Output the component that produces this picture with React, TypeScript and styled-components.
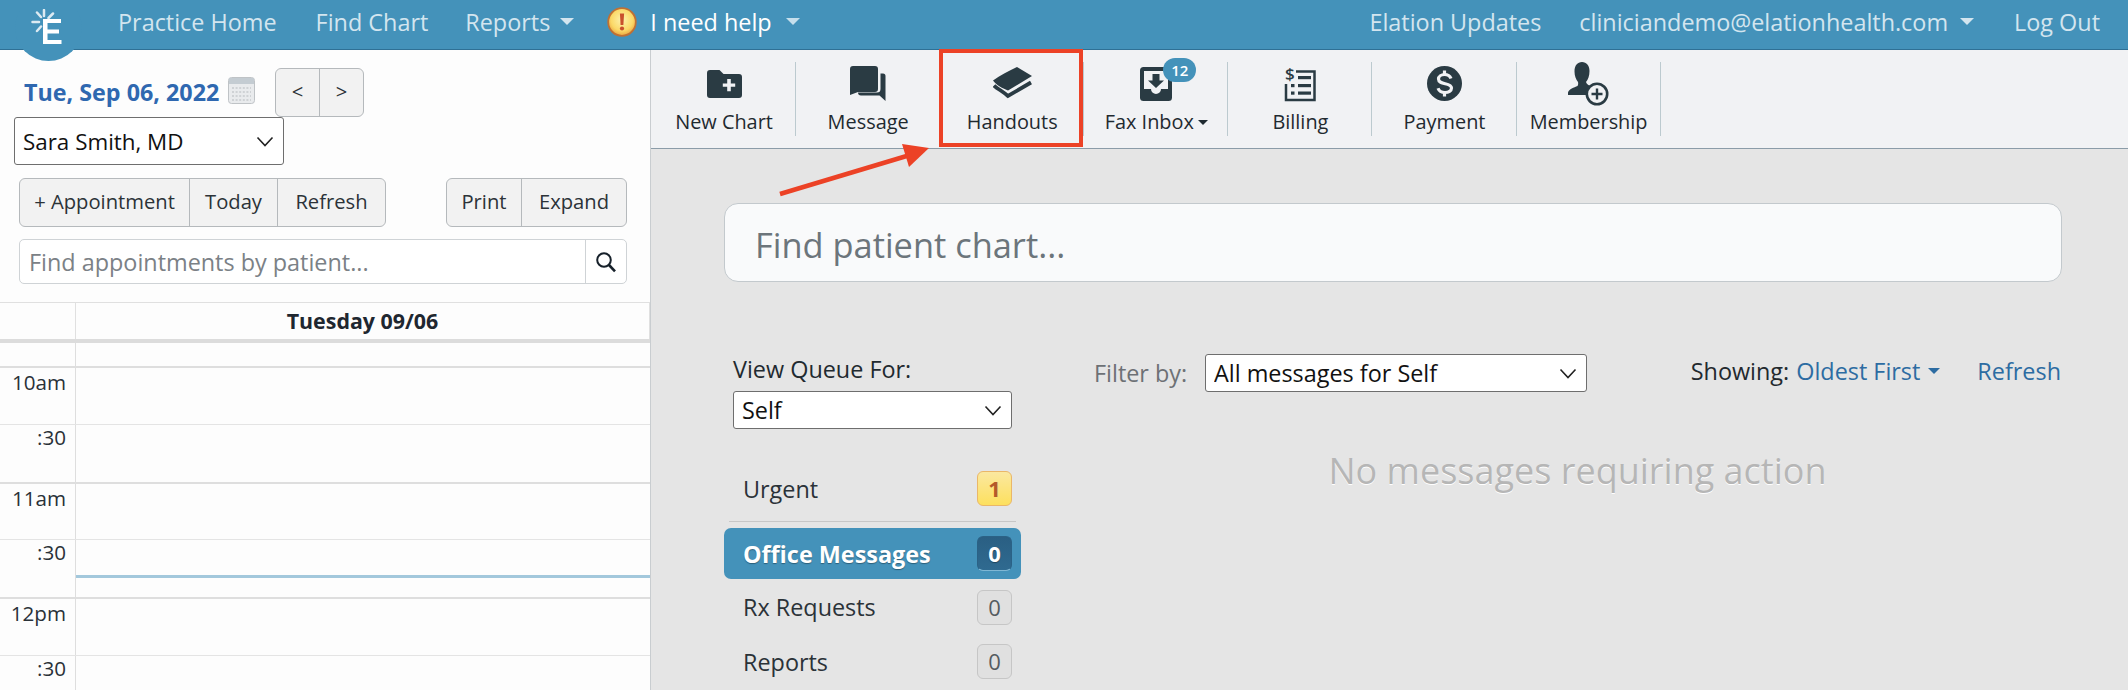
import React from "react";
import styled, { createGlobalStyle } from "styled-components";

const FONT = `"Open Sans", "Noto Sans", sans-serif`;
const INK = "#2a3b43";

const Global = createGlobalStyle`
  html, body { margin: 0; padding: 0; width: 2128px; height: 690px; overflow: hidden; background: #e5e5e5; }
  body { font-family: ${FONT}; color: #212529; }
  * { box-sizing: border-box; }
`;

const Page = styled.div`
  position: relative;
  width: 2128px;
  height: 690px;
  overflow: hidden;
  display: flex;
  flex-direction: column;
`;

/* ---------- top navigation ---------- */
const Nav = styled.header`
  flex: none;
  height: 50px;
  background: #4492ba;
  border-bottom: 1px solid #2f7095;
  display: flex;
  align-items: center;
  padding: 0 28px 6px 118px;
  font-size: 23.4px;
  white-space: nowrap;
`;
const NavLink = styled.span<{ $bright?: boolean; $gap?: number }>`
  color: ${(p) => (p.$bright ? "#ffffff" : "#d3e5ef")};
  margin-right: ${(p) => p.$gap ?? 0}px;
  display: inline-flex;
  align-items: center;
`;
const NavSpacer = styled.div`
  flex: 1;
`;
const Caret = styled.i<{ $color: string; $w: number; $h: number; $ml: number }>`
  display: inline-block;
  margin-left: ${(p) => p.$ml}px;
  border-left: ${(p) => p.$w}px solid transparent;
  border-right: ${(p) => p.$w}px solid transparent;
  border-top: ${(p) => p.$h}px solid ${(p) => p.$color};
`;
const WarnIcon = styled.svg`
  width: 30px;
  height: 30px;
  margin-right: 13px;
`;
const LogoBadge = styled.div`
  position: absolute;
  left: 15px;
  top: -5px;
  width: 67px;
  height: 66px;
  border-radius: 50%;
  background: #4492ba;
  display: flex;
  align-items: center;
  justify-content: center;
`;
const LogoSvg = styled.svg`
  width: 34px;
  height: 40px;
  margin: 2px 0 0 -5px;
`;

/* ---------- body ---------- */
const Body = styled.div`
  flex: 1;
  display: flex;
  min-height: 0;
`;
const Left = styled.aside`
  flex: none;
  width: 651px;
  background: #fdfdfd;
  border-right: 1px solid #c9cdd0;
  display: flex;
  flex-direction: column;
  overflow: hidden;
`;
const DateRow = styled.div`
  flex: none;
  height: 67px;
  padding: 18px 0 0 24px;
  display: flex;
  align-items: flex-start;
`;
const DateText = styled.span`
  font-size: 23.3px;
  line-height: 49px;
  font-weight: 700;
  color: #2f68b0;
  white-space: nowrap;
  width: 204px;
`;
const CalIcon = styled.svg`
  width: 27px;
  height: 27px;
  margin: 9px 20px 0 0;
`;
const Group = styled.div`
  display: inline-flex;
  height: 49px;
  border: 1px solid #b5b9bc;
  border-radius: 6px;
  background: #f2f2f2;
  overflow: hidden;
`;
const GroupBtn = styled.button<{ $w: number }>`
  width: ${(p) => p.$w}px;
  flex: none;
  height: 100%;
  padding: 0 0 3px;
  border: 0;
  border-right: 1px solid #b5b9bc;
  background: transparent;
  font-family: ${FONT};
  font-size: 20.2px;
  color: #2c3338;
  &:last-child { border-right: 0; }
`;
const chevron = `url("data:image/svg+xml,%3Csvg xmlns='http://www.w3.org/2000/svg' width='18' height='11' viewBox='0 0 18 11'%3E%3Cpath d='M1.5 1.5 9 9.5l7.5-8' fill='none' stroke='%23222' stroke-width='1.6'/%3E%3C/svg%3E")`;
const Select = styled.select<{ $w: number; $h: number; $size: number }>`
  appearance: none;
  display: block;
  width: ${(p) => p.$w}px;
  height: ${(p) => p.$h}px;
  padding: 0 0 0 8px;
  background: #fff ${chevron} no-repeat right 9px center;
  border: 1px solid #6e6e6e;
  border-radius: 3px;
  font-family: ${FONT};
  font-size: ${(p) => p.$size}px;
  color: #111;
`;
const DoctorRow = styled.div`
  flex: none;
  padding-left: 14px;
  height: 61px;
`;
const ActionRow = styled.div`
  flex: none;
  padding: 0 23px 0 19px;
  display: flex;
  justify-content: space-between;
  height: 61px;
`;
const ApptSearch = styled.div`
  flex: none;
  margin: 0 23px 0 19px;
  height: 45px;
  display: flex;
  border: 1px solid #cfd3d6;
  border-radius: 5px;
  background: #fff;
  overflow: hidden;
`;
const ApptInput = styled.input`
  flex: 1;
  min-width: 0;
  border: 0;
  outline: 0;
  padding: 0 0 0 9px;
  font-family: ${FONT};
  font-size: 23.4px;
  background: transparent;
  &::placeholder { color: #7b8186; opacity: 1; }
`;
const ApptSearchBtn = styled.div`
  flex: none;
  width: 41px;
  border-left: 1px solid #cfd3d6;
  display: flex;
  align-items: center;
  justify-content: center;
`;

/* ---------- calendar ---------- */
const Calendar = styled.div`
  position: relative;
  margin-top: 18px;
  border-top: 1px solid #e0e0e0;
  flex: 1;
  min-height: 0;
`;
const CalHead = styled.div`
  height: 36px;
  display: grid;
  grid-template-columns: 76px 1fr;
  border-bottom: 4px solid #dcdcdc;
  box-sizing: content-box;
`;
const HeadCell = styled.div`
  border-left: 1px solid #e0e0e0;
  border-right: 1px solid #e0e0e0;
  text-align: center;
  font-size: 21.4px;
  font-weight: 700;
  line-height: 36px;
  color: #1f2730;
  margin-left: -1px;
`;
const TimeRow = styled.div<{ $h: number; $kind: "hour" | "half" | "none" }>`
  height: ${(p) => p.$h}px;
  display: grid;
  grid-template-columns: 76px 1fr;
  border-top: ${(p) =>
    p.$kind === "hour" ? "2px solid #dedede" : p.$kind === "half" ? "1px solid #e4e4e4" : "0"};
`;
const TimeLabel = styled.div<{ $lh: number }>`
  border-right: 1px solid #dedede;
  text-align: right;
  padding: 0 9px 0 0;
  font-size: 20.6px;
  line-height: ${(p) => p.$lh}px;
  color: #2a3138;
`;
const NowLine = styled.div`
  position: absolute;
  left: 76px;
  right: 0;
  top: 272px;
  height: 3px;
  background: #a3c8dc;
`;

/* ---------- main ---------- */
const Main = styled.main`
  flex: 1;
  min-width: 0;
  background: #e5e5e5;
  display: flex;
  flex-direction: column;
`;
const Toolbar = styled.div`
  flex: none;
  height: 99px;
  background: #f1f2f4;
  border-bottom: 1px solid #8b9ca8;
  display: flex;
  align-items: flex-start;
  padding: 12px 0 0 1px;
`;
const Tool = styled.div`
  position: relative;
  width: 144.1px;
  height: 74px;
  padding-left: 1px;
  border-right: 1px solid #bccacf;
  display: flex;
  flex-direction: column;
  align-items: center;
`;
const IconSlot = styled.div`
  height: 43px;
  margin-bottom: 3px;
  display: flex;
  align-items: center;
  justify-content: center;
`;
const ToolLabel = styled.div`
  font-size: 19.9px;
  line-height: 28px;
  color: #1f2a30;
  white-space: nowrap;
  display: flex;
  align-items: center;
`;
const FaxBadge = styled.span`
  position: absolute;
  left: 79px;
  top: -4px;
  width: 33px;
  height: 24px;
  border-radius: 12px;
  background: #4492ba;
  color: #fff;
  font-size: 15px;
  font-weight: 600;
  line-height: 24px;
  text-align: center;
`;
const MainBody = styled.div`
  flex: 1;
  min-height: 0;
  padding: 54px 66px 0 73px;
`;
const FindChart = styled.input`
  display: block;
  width: 100%;
  height: 79px;
  border: 1px solid #c3c9cd;
  border-radius: 14px;
  background: #f9fafb;
  outline: 0;
  padding: 3px 0 0 30px;
  font-family: ${FONT};
  font-size: 34.4px;
  &::placeholder { color: #6c757b; opacity: 1; }
`;
const Columns = styled.div`
  display: flex;
  margin-top: 71px;
`;
const QueueCol = styled.div`
  flex: none;
  width: 297px;
`;
const QueueLabel = styled.div`
  padding-left: 9px;
  font-size: 23.4px;
  line-height: 32px;
  height: 38px;
  color: #1f2a30;
`;
const QueueSelect = styled.div`
  padding-left: 9px;
  height: 38px;
`;
const QueueList = styled.div`
  display: flex;
  flex-direction: column;
  margin-top: 35px;
`;
const QueueItem = styled.div<{ $active?: boolean; $rule?: boolean; $h: number; $mt?: number }>`
  flex: none;
  height: ${(p) => p.$h}px;
  margin: ${(p) => (p.$rule ? "0 5px" : `${p.$mt ?? 0}px 0 0`)};
  padding: ${(p) => (p.$rule ? "0 4px 8px 14px" : "0 9px 0 19px")};
  display: flex;
  align-items: center;
  justify-content: space-between;
  font-size: 23.4px;
  border-radius: ${(p) => (p.$rule ? 0 : 7)}px;
  font-weight: ${(p) => (p.$active ? 700 : 400)};
  color: ${(p) => (p.$active ? "#fff" : "#2b3238")};
  background: ${(p) => (p.$active ? "#4492ba" : "transparent")};
  text-shadow: ${(p) => (p.$active ? "0 1px 1px rgba(0,0,0,.35)" : "none")};
  border-bottom: ${(p) => (p.$rule ? "1px solid #c7c7c7" : "0")};
`;
const Badge = styled.span<{ $tone: "warn" | "dark" | "mute" }>`
  flex: none;
  width: 35px;
  height: 35px;
  border-radius: 6px;
  text-align: center;
  font-size: 22px;
  line-height: 32px;
  font-weight: ${(p) => (p.$tone === "mute" ? 400 : 700)};
  color: ${(p) => (p.$tone === "warn" ? "#b4592a" : p.$tone === "dark" ? "#fff" : "#555b60")};
  background: ${(p) =>
    p.$tone === "warn"
      ? "linear-gradient(#fbe8a0, #fde05e)"
      : p.$tone === "dark"
      ? "linear-gradient(#2a5f83, #2f6a90)"
      : "#e0e0e0"};
  border: 1px solid
    ${(p) => (p.$tone === "warn" ? "#eab768" : p.$tone === "dark" ? "#2b6286" : "#c6c6c6")};
  border-bottom-color: ${(p) =>
    p.$tone === "dark" ? "#7fb7d4" : p.$tone === "warn" ? "#eab768" : "#c6c6c6"};
`;
const MsgCol = styled.div`
  flex: 1;
  min-width: 0;
  padding: 1px 1px 0 73px;
`;
const FilterRow = styled.div`
  display: flex;
  align-items: center;
  height: 38px;
  font-size: 23.4px;
  white-space: nowrap;
`;
const FilterLabel = styled.span`
  color: #6d7175;
  width: 111px;
`;
const Showing = styled.span`
  color: #23292e;
  margin-left: auto;
  margin-top: -5px;
`;
const BlueLink = styled.span<{ $ml: number }>`
  color: #2d6ca2;
  margin-left: ${(p) => p.$ml}px;
  margin-top: -5px;
  display: inline-flex;
  align-items: center;
`;
const EmptyText = styled.div`
  margin-top: 55px;
  text-align: center;
  font-size: 36px;
  line-height: 48px;
  color: #b6b6b6;
  text-shadow: 0 1px 0 #fff;
`;

/* ---------- annotation over the page ---------- */
const Highlight = styled.div`
  position: absolute;
  left: 939px;
  top: 49px;
  width: 144px;
  height: 98px;
  border: 4.5px solid #ec4226;
`;
const Arrow = styled.svg`
  position: absolute;
  left: 770px;
  top: 140px;
  width: 170px;
  height: 65px;
`;

const Icons = {
  Folder: () => (
    <svg width="35" height="28" viewBox="0 0 35 28">
      <path fill={INK} d="M3 0h9.5l4 4H32a3 3 0 0 1 3 3v18a3 3 0 0 1-3 3H3a3 3 0 0 1-3-3V3a3 3 0 0 1 3-3z" />
      <path fill="#f1f2f4" d="M20.2 9h3.6v4.4h4.4v3.4h-4.4v4.4h-3.6v-4.4h-4.4v-3.4h4.4z" />
    </svg>
  ),
  Message: () => (
    <svg width="36" height="35" viewBox="0 0 36 35">
      <path fill={INK} d="M3 0h22a3 3 0 0 1 3 3v20a3 3 0 0 1-3 3H8l-8 3V3a3 3 0 0 1 3-3z" />
      <path fill={INK} d="M30.5 7.5H33a2.5 2.5 0 0 1 2.500 2.500V35l-6-5.500H11a3 3 0 0 1-3-3h19a3.500 3.500 0 0 0 3.500-3.500z" />
    </svg>
  ),
  Book: () => (
    <svg width="39" height="33" viewBox="0 0 39 33">
      <path fill={INK} d="M24 0l15 9-24 14.500C9 21 3 18 0 13.500 7 8 16 4 24 0z" />
      <path fill="none" stroke={INK} strokeWidth="3.800" d="M1 18.500c3 3 9 6 14 10.500L38 15.500" />
    </svg>
  ),
  Fax: () => (
    <svg width="32" height="34" viewBox="0 0 32 34">
      <rect width="32" height="34" rx="3.500" fill={INK} />
      <path fill="#f1f2f4" d="M4 4h24v18h-7a5 5 0 0 1-10 0H4z" />
      <path fill={INK} d="M12.500 7h7v6.500H24L16 21l-8-7.500h4.500z" />
    </svg>
  ),
  Billing: () => (
    <svg width="32" height="36" viewBox="0 0 32 36">
      <text x="1" y="14" fontFamily={FONT} fontSize="17" fontWeight="600" fill={INK}>$</text>
      <path fill="none" stroke={INK} strokeWidth="2.500" d="M12 5.500h18.500v28.500H2V18" />
      <rect x="14" y="10" width="13" height="3.200" fill={INK} />
      <rect x="7" y="18" width="3.500" height="3.200" fill={INK} />
      <rect x="14" y="18" width="13" height="3.200" fill={INK} />
      <rect x="7" y="25.500" width="3.500" height="3.200" fill={INK} />
      <rect x="14" y="25.500" width="13" height="3.200" fill={INK} />
    </svg>
  ),
  Dollar: () => (
    <svg width="35" height="35" viewBox="0 0 35 35">
      <circle cx="17.500" cy="17.500" r="17.500" fill={INK} />
      <path fill="none" stroke="#f1f2f4" strokeWidth="3.200" d="M24 12.500c-1-2.500-3.500-4-6.500-4s-6 1.800-6 4.600c0 6.400 13 3 13 9 0 2.800-3 4.400-6.500 4.400s-6-1.600-7-4.200" />
      <path stroke="#f1f2f4" strokeWidth="3.200" d="M17.500 4.500v4M17.500 26.500v4" />
    </svg>
  ),
  Member: () => (
    <svg width="41" height="44" viewBox="0 0 41 44">
      <path fill={INK} d="M14 0c4.500 0 7.500 3.500 7.500 9 0 5-1.500 8.500-3.500 11 .5 2.500 3 3.500 5.500 4.500L24 33H0v-2.500c1-3.500 6-5 9.500-6.500.8-1.200.8-2.500.5-4-2-2.500-3.500-6-3.500-10.500C6.500 3.500 9.500 0 14 0z" />
      <circle cx="29" cy="32" r="10.200" fill="#f1f2f4" stroke={INK} strokeWidth="2.600" />
      <path fill={INK} d="M27.800 26.500h2.400v4.300h4.300v2.400h-4.300v4.300h-2.400v-4.300h-4.300v-2.400h4.300z" />
    </svg>
  ),
};

const SLOTS = [
  { hour: "10am", half: ":30" },
  { hour: "11am", half: ":30" },
  { hour: "12pm", half: ":30" },
];

const App: React.FC = () => (
  <Page>
    <Global />
    <Nav>
      <NavLink $gap={39}>Practice Home</NavLink>
      <NavLink $gap={37}>Find Chart</NavLink>
      <NavLink $gap={33}>
        Reports
        <Caret $color="#d3e5ef" $w={7} $h={7} $ml={10} />
      </NavLink>
      <WarnIcon viewBox="0 0 30 30">
        <defs>
          <radialGradient id="warnFill" cx="50%" cy="42%" r="60%">
            <stop offset="0%" stopColor="#fdf2ae" />
            <stop offset="65%" stopColor="#fbd968" />
            <stop offset="100%" stopColor="#eaa03b" />
          </radialGradient>
        </defs>
        <circle cx="15" cy="15" r="13.800" fill="url(#warnFill)" stroke="#bf7034" strokeWidth="1.800" />
        <path fill="#c9502c" d="M12.900 6.500h4.200l-.7 11.500h-2.800z" />
        <circle cx="15" cy="21.500" r="2.100" fill="#c9502c" />
      </WarnIcon>
      <NavLink $bright>
        I need help
        <Caret $color="#c6dfec" $w={7} $h={7} $ml={14} />
      </NavLink>
      <NavSpacer />
      <NavLink $gap={38}>Elation Updates</NavLink>
      <NavLink $gap={40}>
        cliniciandemo@elationhealth.com
        <Caret $color="#d3e5ef" $w={7} $h={7} $ml={12} />
      </NavLink>
      <NavLink>Log Out</NavLink>
    </Nav>
    <LogoBadge>
      <LogoSvg viewBox="0 0 34 40">
        <path fill="#fff" d="M14 10h18v4H18.500v6.500H30v4H18.500V31h14v4H14z" />
        <path fill="none" stroke="#dceaf2" strokeWidth="2.500" strokeLinecap="round" d="M15 1v6M24 4.500l-4.500 4.500M3.500 13H10M8 3.500l4 4.500M8 22l4-4.500" />
      </LogoSvg>
    </LogoBadge>

    <Body>
      <Left>
        <DateRow>
          <DateText>Tue, Sep 06, 2022</DateText>
          <CalIcon viewBox="0 0 27 27">
            <rect x="0.500" y="0.500" width="26" height="26" rx="3" fill="#e9ebed" stroke="#bfc3c6" />
            <rect x="1" y="1" width="25" height="6" fill="#c4ccd2" />
            <path stroke="#c6cacd" strokeWidth="1.500" strokeDasharray="2 1.600" d="M4 11h19M4 15h19M4 19h19M4 23h19" />
          </CalIcon>
          <Group>
            <GroupBtn $w={44}>&lt;</GroupBtn>
            <GroupBtn $w={43}>&gt;</GroupBtn>
          </Group>
        </DateRow>
        <DoctorRow>
          <Select $w={270} $h={48} $size={22.4} defaultValue="Sara Smith, MD">
            <option>Sara Smith, MD</option>
          </Select>
        </DoctorRow>
        <ActionRow>
          <Group>
            <GroupBtn $w={170}>+ Appointment</GroupBtn>
            <GroupBtn $w={88}>Today</GroupBtn>
            <GroupBtn $w={107}>Refresh</GroupBtn>
          </Group>
          <Group>
            <GroupBtn $w={75}>Print</GroupBtn>
            <GroupBtn $w={104}>Expand</GroupBtn>
          </Group>
        </ActionRow>
        <ApptSearch>
          <ApptInput placeholder="Find appointments by patient..." />
          <ApptSearchBtn>
            <svg width="22" height="22" viewBox="0 0 22 22">
              <circle cx="9" cy="9" r="6.800" fill="none" stroke="#16202a" strokeWidth="2" />
              <path d="M14 14l6 6.300" stroke="#16202a" strokeWidth="2.600" />
            </svg>
          </ApptSearchBtn>
        </ApptSearch>
        <Calendar>
          <CalHead>
            <div />
            <HeadCell>Tuesday 09/06</HeadCell>
          </CalHead>
          <TimeRow $h={23} $kind="none">
            <TimeLabel $lh={23} />
            <div />
          </TimeRow>
          {SLOTS.map((s) => (
            <React.Fragment key={s.hour}>
              <TimeRow $h={57.500} $kind="hour">
                <TimeLabel $lh={28}>{s.hour}</TimeLabel>
                <div />
              </TimeRow>
              <TimeRow $h={58} $kind="half">
                <TimeLabel $lh={24}>{s.half}</TimeLabel>
                <div />
              </TimeRow>
            </React.Fragment>
          ))}
          <NowLine />
        </Calendar>
      </Left>

      <Main>
        <Toolbar>
          <Tool>
            <IconSlot><Icons.Folder /></IconSlot>
            <ToolLabel>New Chart</ToolLabel>
          </Tool>
          <Tool>
            <IconSlot><Icons.Message /></IconSlot>
            <ToolLabel>Message</ToolLabel>
          </Tool>
          <Tool>
            <IconSlot><Icons.Book /></IconSlot>
            <ToolLabel>Handouts</ToolLabel>
          </Tool>
          <Tool>
            <IconSlot><Icons.Fax /></IconSlot>
            <FaxBadge>12</FaxBadge>
            <ToolLabel>
              Fax Inbox
              <Caret $color="#1f2a30" $w={5} $h={5} $ml={4} />
            </ToolLabel>
          </Tool>
          <Tool>
            <IconSlot><Icons.Billing /></IconSlot>
            <ToolLabel>Billing</ToolLabel>
          </Tool>
          <Tool>
            <IconSlot><Icons.Dollar /></IconSlot>
            <ToolLabel>Payment</ToolLabel>
          </Tool>
          <Tool>
            <IconSlot><Icons.Member /></IconSlot>
            <ToolLabel>Membership</ToolLabel>
          </Tool>
        </Toolbar>
        <MainBody>
          <FindChart placeholder="Find patient chart..." />
          <Columns>
            <QueueCol>
              <QueueLabel>View Queue For:</QueueLabel>
              <QueueSelect>
                <Select $w={279} $h={38} $size={23.4} defaultValue="Self">
                  <option>Self</option>
                </Select>
              </QueueSelect>
              <QueueList>
                <QueueItem $rule $h={58}>
                  Urgent
                  <Badge $tone="warn">1</Badge>
                </QueueItem>
                <QueueItem $active $h={51} $mt={6}>
                  Office Messages
                  <Badge $tone="dark">0</Badge>
                </QueueItem>
                <QueueItem $h={54} $mt={1}>
                  Rx Requests
                  <Badge $tone="mute">0</Badge>
                </QueueItem>
                <QueueItem $h={55}>
                  Reports
                  <Badge $tone="mute">0</Badge>
                </QueueItem>
              </QueueList>
            </QueueCol>
            <MsgCol>
              <FilterRow>
                <FilterLabel>Filter by:</FilterLabel>
                <Select $w={382} $h={38} $size={23.4} defaultValue="All messages for Self">
                  <option>All messages for Self</option>
                </Select>
                <Showing>Showing:</Showing>
                <BlueLink $ml={7}>
                  Oldest First
                  <Caret $color="#2d6ca2" $w={6.500} $h={6.500} $ml={8} />
                </BlueLink>
                <BlueLink $ml={37}>Refresh</BlueLink>
              </FilterRow>
              <EmptyText>No messages requiring action</EmptyText>
            </MsgCol>
          </Columns>
        </MainBody>
      </Main>
    </Body>

    <Highlight />
    <Arrow viewBox="0 0 170 65">
      <path d="M10 54L140 15" stroke="#ec4226" strokeWidth="4.500" />
      <path d="M159 8L132 4l7 23z" fill="#ec4226" />
    </Arrow>
  </Page>
);

export default App;
